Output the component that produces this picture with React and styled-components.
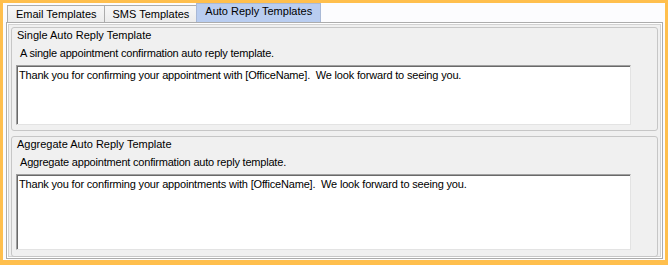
import React from 'react';
import styled, { createGlobalStyle } from 'styled-components';

const GlobalStyle = createGlobalStyle`
  html, body {
    margin: 0;
    padding: 0;
    background: #ffbf4d;
  }
  * {
    box-sizing: border-box;
  }
`;

const Frame = styled.div`
  width: 668px;
  height: 265px;
  padding: 3px 3px 5px 3px;
  background: #ffbf4d;
  font-family: "Liberation Sans", Arial, sans-serif;
  font-size: 11px;
  color: #000;
`;

const Window = styled.div`
  display: flex;
  flex-direction: column;
  height: 100%;
  background: #fcfcfe;
`;

const TabStrip = styled.div`
  display: flex;
  align-items: flex-end;
  height: 19px;
  padding-left: 4px;
`;

const Tab = styled.div`
  height: ${(p) => (p.$active ? '19px' : '17px')};
  padding: ${(p) => (p.$active ? '1px 8px 0 8px' : '2px 7px 0 8px')};
  line-height: 13px;
  white-space: nowrap;
  border: 1px solid ${(p) => (p.$active ? '#a9b9d6' : '#acacac')};
  border-bottom: none;
  margin-left: ${(p) => (p.$first ? '0' : '-1px')};
  background: ${(p) =>
    p.$active ? '#b9cdf0' : 'linear-gradient(#f7f7f7, #ececec)'};
  position: relative;
  z-index: ${(p) => (p.$active ? 1 : 0)};
`;

const TabPage = styled.div`
  flex: 1;
  display: flex;
  flex-direction: column;
  gap: 5px;
  margin: 0 2px 1px 3px;
  padding: 4px 4px 1px 4px;
  border: 1px solid #acacac;
  background: #f0f0f0;
  box-shadow: inset 0 0 0 1px #ffffff, inset 0 0 0 2px #d2d2d2;
`;

const Group = styled.div`
  display: flex;
  flex-direction: column;
  flex: ${(p) => (p.$fill ? 1 : 'none')};
  padding: 1px 4px ${(p) => p.$bottom}px 4px;
  border: 1px solid #c6c6c6;
  border-radius: 3px;
`;

const GroupTitle = styled.div`
  line-height: 13px;
  margin-left: 1px;
`;

const Description = styled.div`
  line-height: 13px;
  margin: 5px 0 0 4px;
  letter-spacing: -0.2px;
`;

const TextBox = styled.div`
  margin-top: 5px;
  width: 615px;
  height: ${(p) => p.$height}px;
  padding: 3px 2px;
  line-height: 13px;
  white-space: pre;
  letter-spacing: -0.18px;
  background: #fff;
  border: 1px solid;
  border-color: #a0a0a0 #e3e3e3 #e3e3e3 #a0a0a0;
  box-shadow: inset 1px 1px 0 #696969;
`;

const tabs = ['Email Templates', 'SMS Templates', 'Auto Reply Templates'];

const templates = [
  {
    title: 'Single Auto Reply Template',
    description: 'A single appointment confirmation auto reply template.',
    text: 'Thank you for confirming your appointment with [OfficeName].  We look forward to seeing you.',
    height: 60,
    bottom: 5,
  },
  {
    title: 'Aggregate Auto Reply Template',
    description: 'Aggregate appointment confirmation auto reply template.',
    text: 'Thank you for confirming your appointments with [OfficeName].  We look forward to seeing you.',
    height: 76,
    bottom: 6,
    fill: true,
  },
];

export default function App() {
  return (
    <>
      <GlobalStyle />
      <Frame>
        <Window>
          <TabStrip>
            {tabs.map((t, i) => (
              <Tab key={t} $first={i === 0} $active={i === 2}>
                {t}
              </Tab>
            ))}
          </TabStrip>
          <TabPage>
            {templates.map((g) => (
              <Group key={g.title} $fill={g.fill} $bottom={g.bottom}>
                <GroupTitle>{g.title}</GroupTitle>
                <Description>{g.description}</Description>
                <TextBox $height={g.height}>{g.text}</TextBox>
              </Group>
            ))}
          </TabPage>
        </Window>
      </Frame>
    </>
  );
}
